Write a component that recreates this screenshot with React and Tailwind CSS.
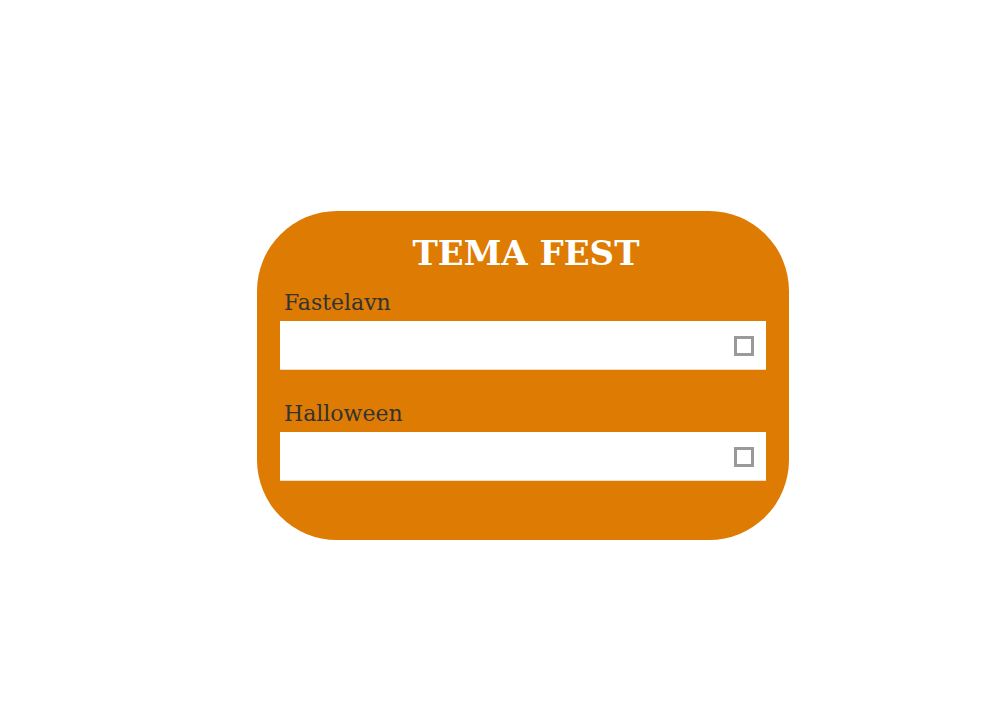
const Field = ({ label }) => (
  <div>
    <label className="block pl-1 text-[22px] leading-[28px] text-[#333333]">{label}</label>
    <div className="mt-[4px] flex h-[49px] items-center justify-end border-b border-[#f3dcc4] bg-white pr-[12px] pt-[2px]">
      <span className="block h-[20px] w-[20px] border-[3px] border-[#9a9a9a] bg-white" />
    </div>
  </div>
);

export default function App() {
  return (
    <div className="min-h-[727px] bg-white pl-[257px] pt-[211px]" style={{ fontFamily: '"DejaVu Serif", "Liberation Serif", serif' }}>
      <div className="w-[532px] h-[329px] rounded-[80px] bg-[#de7b03] px-[23px] pt-[20px]">
        <h1 className="pl-[6px] text-center text-[34px] leading-[44px] font-bold text-white">TEMA FEST</h1>
        <div className="mt-[14px] flex flex-col gap-[30px]">
          <Field label="Fastelavn" />
          <Field label="Halloween" />
        </div>
      </div>
    </div>
  );
}
